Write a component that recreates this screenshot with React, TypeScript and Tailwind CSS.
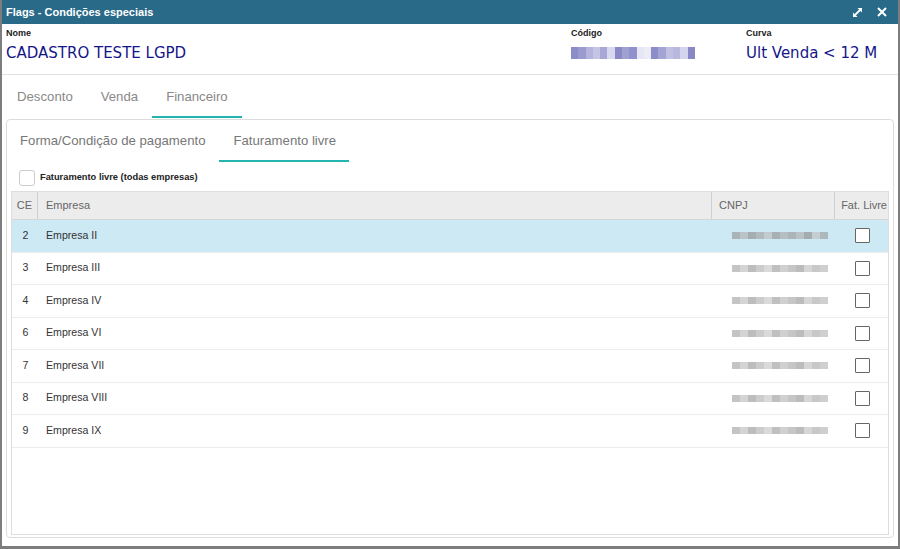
import React from "react";

const codeShades = ["#8c8cc8", "#9a9ad0", "#b4b4dc", "#c4c4e4", "#a8a8d6", "#d8d8ee", "#8a8ac6", "#a0a0d2", "#9090cc", "#e6e6f4", "#ececf6", "#8c8cc8", "#a4a4d4", "#c0c0e2", "#b8b8de", "#d4d4ec", "#8888c4"];
const cnpjShades = ["#a9b4b9", "#b9c3c8", "#a3adb2", "#b0babf", "#c2cbd0", "#a6b0b5", "#b4bec3", "#aab4b9", "#b8c2c7", "#a2acb1", "#c4cdd2", "#adb7bc"];
const cnpjShadesW = ["#c4c4c4", "#d4d4d4", "#bdbdbd", "#cccccc", "#dadada", "#c0c0c0", "#d0d0d0", "#c6c6c6", "#bcbcbc", "#d6d6d6", "#c8c8c8", "#cfcfcf"];

function Pix({ shades, w, h }: { shades: string[]; w: number; h: number }) {
  const bw = w / shades.length;
  return (
    <div className="flex" style={{ width: w, height: h }}>
      {shades.map((c, i) => (
        <div key={i} style={{ width: bw, height: h, background: c }} />
      ))}
    </div>
  );
}

const rows = [
  { ce: "2", name: "Empresa II" },
  { ce: "3", name: "Empresa III" },
  { ce: "4", name: "Empresa IV" },
  { ce: "6", name: "Empresa VI" },
  { ce: "7", name: "Empresa VII" },
  { ce: "8", name: "Empresa VIII" },
  { ce: "9", name: "Empresa IX" },
];

export default function App() {
  return (
    <div
      className="w-[900px] h-[549px] flex flex-col bg-white border-x-2 border-b-[3px] border-[#7d7d7d] overflow-hidden"
      style={{ fontFamily: '"Liberation Sans", Arial, sans-serif' }}
    >
      {/* Title bar */}
      <div className="h-[24px] shrink-0 bg-[#296a89] flex items-center justify-between -mx-[2px] pl-[6px] pr-[13px]">
        <span className="text-white text-[11px] font-bold">Flags - Condições especiais</span>
        <div className="flex items-center gap-[14px]">
          <svg width="11" height="11" viewBox="0 0 11 11">
            <path d="M2.5 8.5L8.5 2.5" stroke="#fff" strokeWidth="1.8" fill="none" />
            <path d="M5.5 1H10V5.5Z" fill="#fff" />
            <path d="M1 5.5V10H5.5Z" fill="#fff" />
          </svg>
          <svg width="10" height="10" viewBox="0 0 10 10">
            <path d="M1 1l8 8M9 1l-8 8" stroke="#fff" strokeWidth="2" />
          </svg>
        </div>
      </div>

      {/* Header */}
      <div className="h-[51px] shrink-0 flex border-b border-[#e2e2e2] pl-[4px]">
        <div className="w-[565px] flex flex-col pt-[4px]">
          <span className="text-[9px] font-bold text-[#222] leading-[11px]">Nome</span>
          <span className="text-[15px] text-[#15158a] leading-[20px] mt-[4px]" style={{ fontFamily: '"DejaVu Sans", Verdana, sans-serif' }}>
            CADASTRO TESTE LGPD
          </span>
        </div>
        <div className="w-[175px] flex flex-col pt-[4px]">
          <span className="text-[9px] font-bold text-[#222] leading-[11px]">Código</span>
          <div className="mt-[8px]">
            <Pix shades={codeShades} w={124} h={12} />
          </div>
        </div>
        <div className="flex flex-col pt-[4px]">
          <span className="text-[9px] font-bold text-[#222] leading-[11px]">Curva</span>
          <span className="text-[15px] text-[#15158a] leading-[20px] mt-[4px]" style={{ fontFamily: '"DejaVu Sans", Verdana, sans-serif' }}>
            Ult Venda &lt; 12 M
          </span>
        </div>
      </div>

      {/* Tabs */}
      <div className="h-[43px] shrink-0 flex items-stretch pl-[1px] text-[13.2px] text-[#888] whitespace-nowrap">
        <div className="px-[14px] flex items-center">Desconto</div>
        <div className="px-[14px] flex items-center">Venda</div>
        <div className="w-[90px] px-[14px] flex items-center border-b-2 border-[#25b5b0] pt-[2px]">Financeiro</div>
      </div>

      {/* Panel */}
      <div className="flex-1 mx-[4px] mt-[1px] mb-[8px] border border-[#dcdcdc] rounded-[4px] flex flex-col px-[4px] pb-[2px]">
        <div className="h-[42px] shrink-0 flex items-stretch text-[13.2px] text-[#777] whitespace-nowrap">
          <div className="pl-[9px] pr-[14px] flex items-center">Forma/Condição de pagamento</div>
          <div className="w-[130px] px-[14px] flex items-center border-b-2 border-[#25b5b0] pt-[2px]">Faturamento livre</div>
        </div>
        <div className="h-[29px] shrink-0 flex items-center pl-[8px] pt-[2px]">
          <div className="w-[16px] h-[16px] border border-[#ccc] rounded-[3px] bg-white" />
          <span className="ml-[5px] text-[9.3px] font-bold text-[#222]">Faturamento livre (todas empresas)</span>
        </div>
        <div className="flex-1 border border-[#dedede] flex flex-col">
          <div className="h-[28px] shrink-0 flex bg-[#ececec] border-b border-[#d6d6d6] text-[11px] text-[#666]">
            <div className="w-[26px] flex items-center justify-center border-r border-[#d0d0d0]">CE</div>
            <div className="w-[674px] flex items-center pl-[8px] border-r border-[#d0d0d0]">Empresa</div>
            <div className="w-[123px] flex items-center pl-[7px] border-r border-[#d0d0d0]">CNPJ</div>
            <div className="flex-1 flex items-center justify-end pr-[1px]">Fat. Livre</div>
          </div>
          {rows.map((r, i) => (
            <div
              key={r.ce}
              className={`h-[32.5px] shrink-0 flex text-[10.6px] text-[#333] border-b border-[#ececec] ${i === 0 ? "bg-[#cde9f4]" : "bg-white"}`}
            >
              <div className="w-[26px] flex items-center justify-center pl-[1px]">{r.ce}</div>
              <div className="w-[674px] flex items-center pl-[8px]">{r.name}</div>
              <div className="w-[123px] flex items-center justify-end pr-[7px]">
                <Pix shades={i === 0 ? cnpjShades : cnpjShadesW} w={96} h={7} />
              </div>
              <div className="flex-1 flex items-center justify-center pl-[2px]">
                <div className="w-[15px] h-[15px] border border-[#666] rounded-[1px] bg-white" />
              </div>
            </div>
          ))}
        </div>
      </div>
    </div>
  );
}
